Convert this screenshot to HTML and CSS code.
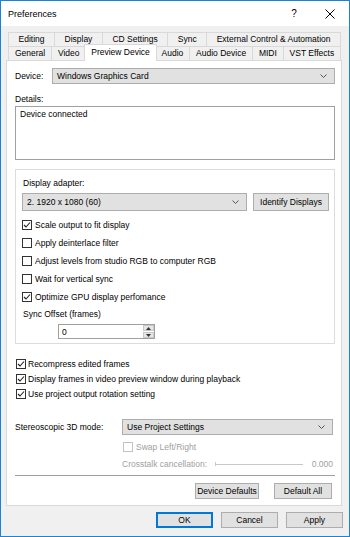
FILE: index.html
```html
<!DOCTYPE html>
<html lang="en">

<head>
  <meta charset="UTF-8">
  <title>Preferences</title>
  <link rel="stylesheet" href="styles.css">
</head>

<body>
  <div class="window">
    <div class="titlebar">
      <span class="title">Preferences</span>
      <span class="cap-btn">?</span>
      <span class="cap-btn">
        <svg width="10" height="10" viewBox="0 0 10 10"><path d="M0.5 0.5 L9.5 9.5 M9.5 0.5 L0.5 9.5" stroke="#000" stroke-width="1" fill="none"/></svg>
      </span>
    </div>

    <div class="tabs">
      <div class="tab-row">
        <div class="tab">Editing</div>
        <div class="tab">Display</div>
        <div class="tab">CD Settings</div>
        <div class="tab">Sync</div>
        <div class="tab">External Control &amp; Automation</div>
      </div>
      <div class="tab-row">
        <div class="tab">General</div>
        <div class="tab">Video</div>
        <div class="tab selected">Preview Device</div>
        <div class="tab">Audio</div>
        <div class="tab">Audio Device</div>
        <div class="tab">MIDI</div>
        <div class="tab">VST Effects</div>
      </div>
    </div>

    <div class="panel">
      <div class="device-row">
        <span class="device-label">Device:</span>
        <div class="combo">
          <span class="combo-text">Windows Graphics Card</span>
          <svg class="chev" width="7" height="4" viewBox="0 0 7 4"><polyline points="0.5,0.5 3.5,3.5 6.5,0.5" stroke="#555" fill="none"/></svg>
        </div>
      </div>

      <div class="field-label">Details:</div>
      <div class="details">Device connected</div>

      <div class="group">
        <div class="group-label">Display adapter:</div>
        <div class="adapter-row">
          <div class="combo">
            <span class="combo-text">2. 1920 x 1080 (60)</span>
            <svg class="chev" width="7" height="4" viewBox="0 0 7 4"><polyline points="0.5,0.5 3.5,3.5 6.5,0.5" stroke="#555" fill="none"/></svg>
          </div>
          <div class="btn identify">Identify Displays</div>
        </div>

        <div class="check-row first">
          <span class="box"><svg width="8" height="8" viewBox="0 0 8 8"><polyline points="1,4 3,6 7,1.5" stroke="#222" stroke-width="1.1" fill="none"/></svg></span>
          <span>Scale output to fit display</span>
        </div>
        <div class="check-row">
          <span class="box"></span>
          <span>Apply deinterlace filter</span>
        </div>
        <div class="check-row">
          <span class="box"></span>
          <span>Adjust levels from studio RGB to computer RGB</span>
        </div>
        <div class="check-row">
          <span class="box"></span>
          <span>Wait for vertical sync</span>
        </div>
        <div class="check-row">
          <span class="box"><svg width="8" height="8" viewBox="0 0 8 8"><polyline points="1,4 3,6 7,1.5" stroke="#222" stroke-width="1.1" fill="none"/></svg></span>
          <span>Optimize GPU display perfomance</span>
        </div>

        <div class="sync-label">Sync Offset (frames)</div>
        <div class="spin">
          <span class="spin-text">0</span>
          <div class="spin-arrows">
            <span class="arrow"><svg width="5" height="3" viewBox="0 0 5 3"><polygon points="0,3 2.5,0 5,3" fill="#333"/></svg></span>
            <span class="arrow"><svg width="5" height="3" viewBox="0 0 5 3"><polygon points="0,0 2.5,3 5,0" fill="#333"/></svg></span>
          </div>
        </div>
      </div>

      <div class="lower-checks">
        <div class="check-row small">
          <span class="box"><svg width="8" height="8" viewBox="0 0 8 8"><polyline points="1,4 3,6 7,1.5" stroke="#222" stroke-width="1.1" fill="none"/></svg></span>
          <span>Recompress edited frames</span>
        </div>
        <div class="check-row small">
          <span class="box"><svg width="8" height="8" viewBox="0 0 8 8"><polyline points="1,4 3,6 7,1.5" stroke="#222" stroke-width="1.1" fill="none"/></svg></span>
          <span>Display frames in video preview window during playback</span>
        </div>
        <div class="check-row small">
          <span class="box"><svg width="8" height="8" viewBox="0 0 8 8"><polyline points="1,4 3,6 7,1.5" stroke="#222" stroke-width="1.1" fill="none"/></svg></span>
          <span>Use project output rotation setting</span>
        </div>
      </div>

      <div class="stereo-row">
        <span class="stereo-label">Stereoscopic 3D mode:</span>
        <div class="combo">
          <span class="combo-text">Use Project Settings</span>
          <svg class="chev" width="7" height="4" viewBox="0 0 7 4"><polyline points="0.5,0.5 3.5,3.5 6.5,0.5" stroke="#555" fill="none"/></svg>
        </div>
      </div>

      <div class="check-row swap disabled">
        <span class="box"></span>
        <span>Swap Left/Right</span>
      </div>

      <div class="crosstalk disabled">
        <span class="crosstalk-label">Crosstalk cancellation:</span>
        <div class="slider"><span class="tick"></span></div>
        <span class="crosstalk-value">0.000</span>
      </div>

      <div class="separator"></div>

      <div class="panel-buttons">
        <div class="btn device-defaults">Device Defaults</div>
        <div class="btn default-all">Default All</div>
      </div>
    </div>

    <div class="footer">
      <div class="btn footer-btn focused">OK</div>
      <div class="btn footer-btn">Cancel</div>
      <div class="btn footer-btn">Apply</div>
    </div>
  </div>
</body>

</html>
```

FILE: styles.css
```css
* {
  box-sizing: border-box;
}

body {
  margin: 0;
  padding: 0;
  font-family: 'Liberation Sans', Arial, sans-serif;
  font-size: 8.5px;
  color: #000;
  background: #f0f0f0;
}

.window {
  width: 350px;
  height: 537px;
  border: 1px solid #1883d7;
  background: #f0f0f0;
  display: flex;
  flex-direction: column;
}

.titlebar {
  height: 25px;
  background: #fff;
  display: flex;
  align-items: center;
  padding-left: 7px;
  padding-right: 1px;
  flex: none;
}

.title {
  flex: 1;
  font-size: 9px;
}

.cap-btn {
  width: 36px;
  height: 25px;
  display: flex;
  align-items: center;
  justify-content: center;
  font-size: 10px;
}

/* tabs */
.tabs {
  padding: 6px 8px 0 7px;
  flex: none;
}

.tab-row {
  display: flex;
  height: 14px;
}

.tab {
  flex: 1 1 auto;
  height: 14px;
  line-height: 13px;
  text-align: center;
  white-space: nowrap;
  border: 1px solid #d9d9d9;
  border-bottom: none;
  background: #f0f0f0;
  margin-left: -1px;
  padding: 0 4px;
}

.tab:first-child {
  margin-left: 0;
}

.tab.selected {
  position: relative;
  z-index: 1;
  height: 17px;
  margin-top: -2px;
  margin-left: -2px;
  margin-right: -1px;
  line-height: 15px;
  background: #fff;
}

/* panel */
.panel {
  height: 446px;
  margin: 0 7px 0 5px;
  border: 1px solid #d9d9d9;
  background: #fff;
  padding: 7px 6px 0 8px;
  flex: none;
}

.combo {
  flex: 1;
  height: 16px;
  background: #e1e1e1;
  border: 1px solid #adadad;
  display: flex;
  align-items: center;
  padding: 0 7px 0 4px;
}

.combo-text {
  flex: 1;
}

.device-row {
  display: flex;
  align-items: center;
}

.device-label {
  width: 37px;
}

.field-label {
  margin-top: 9px;
  line-height: 12px;
}

.details {
  margin-top: 1px;
  height: 54px;
  border: 1px solid #a0a0a0;
  padding: 1px 4px;
  line-height: 12px;
}

/* display adapter group */
.group {
  margin-top: 9px;
  height: 175px;
  border: 1px solid #dcdcdc;
  padding: 7px 5px 0 6px;
}

.group-label {
  line-height: 12px;
  padding-left: 1px;
}

.adapter-row {
  display: flex;
  margin-top: 4px;
  gap: 6px;
}

.adapter-row .combo {
  height: 18px;
}

.btn {
  height: 18px;
  background: #e1e1e1;
  border: 1px solid #adadad;
  display: flex;
  align-items: center;
  justify-content: center;
  white-space: nowrap;
}

.identify {
  width: 76px;
}

.check-row {
  display: flex;
  align-items: center;
  height: 18px;
  gap: 3px;
  white-space: nowrap;
}

.check-row.first {
  margin-top: 5px;
}

.box {
  width: 10px;
  height: 10px;
  border: 1px solid #333;
  background: #fff;
  display: flex;
  align-items: center;
  justify-content: center;
  flex: none;
}

.sync-label {
  margin-top: 2px;
  line-height: 12px;
  padding-left: 1px;
}

.spin {
  margin-top: 4px;
  margin-left: 36px;
  width: 97px;
  height: 15px;
  border: 1px solid #a0a0a0;
  display: flex;
  align-items: center;
  padding-left: 3px;
}

.spin-text {
  flex: 1;
}

.spin-arrows {
  width: 11px;
  height: 13px;
  display: flex;
  flex-direction: column;
  gap: 1px;
}

.arrow {
  flex: 1;
  background: #e6e6e6;
  border: 1px solid #c8c8c8;
  display: flex;
  align-items: center;
  justify-content: center;
}

/* lower section */
.lower-checks {
  margin-top: 12px;
  padding-left: 1px;
}

.check-row.small {
  height: 15px;
  gap: 2px;
}

.stereo-row {
  display: flex;
  align-items: center;
  margin-top: 18px;
  margin-right: 2px;
}

.stereo-label {
  width: 107px;
}

.disabled {
  color: #a0a0a0;
}

.disabled .box {
  border-color: #c4c4c4;
}

.check-row.swap {
  height: 14px;
  margin-top: 5px;
  padding-left: 108px;
}

.crosstalk {
  display: flex;
  align-items: center;
  height: 14px;
  margin-top: 3px;
  padding-left: 107px;
  margin-right: 2px;
}

.crosstalk-label {
  width: 93px;
}

.slider {
  position: relative;
  width: 88px;
  height: 1px;
  background: #c8c8c8;
}

.tick {
  position: absolute;
  left: 0;
  top: -2px;
  width: 1px;
  height: 4px;
  background: #c8c8c8;
}

.crosstalk-value {
  flex: 1;
  text-align: right;
}

.separator {
  margin-top: 4px;
  height: 1px;
  background: #a0a0a0;
}

.panel-buttons {
  display: flex;
  justify-content: flex-end;
  gap: 15px;
  margin-top: 7px;
  margin-right: 3px;
}

.panel-buttons .btn {
  height: 16px;
}

.device-defaults {
  width: 64px;
}

.default-all {
  width: 58px;
}

/* dialog buttons */
.footer {
  display: flex;
  justify-content: flex-end;
  gap: 8px;
  margin-top: 6px;
  padding-right: 6px;
}

.footer-btn {
  width: 57px;
  height: 16px;
}

.footer-btn.focused {
  border: 2px solid #0078d7;
}
```
